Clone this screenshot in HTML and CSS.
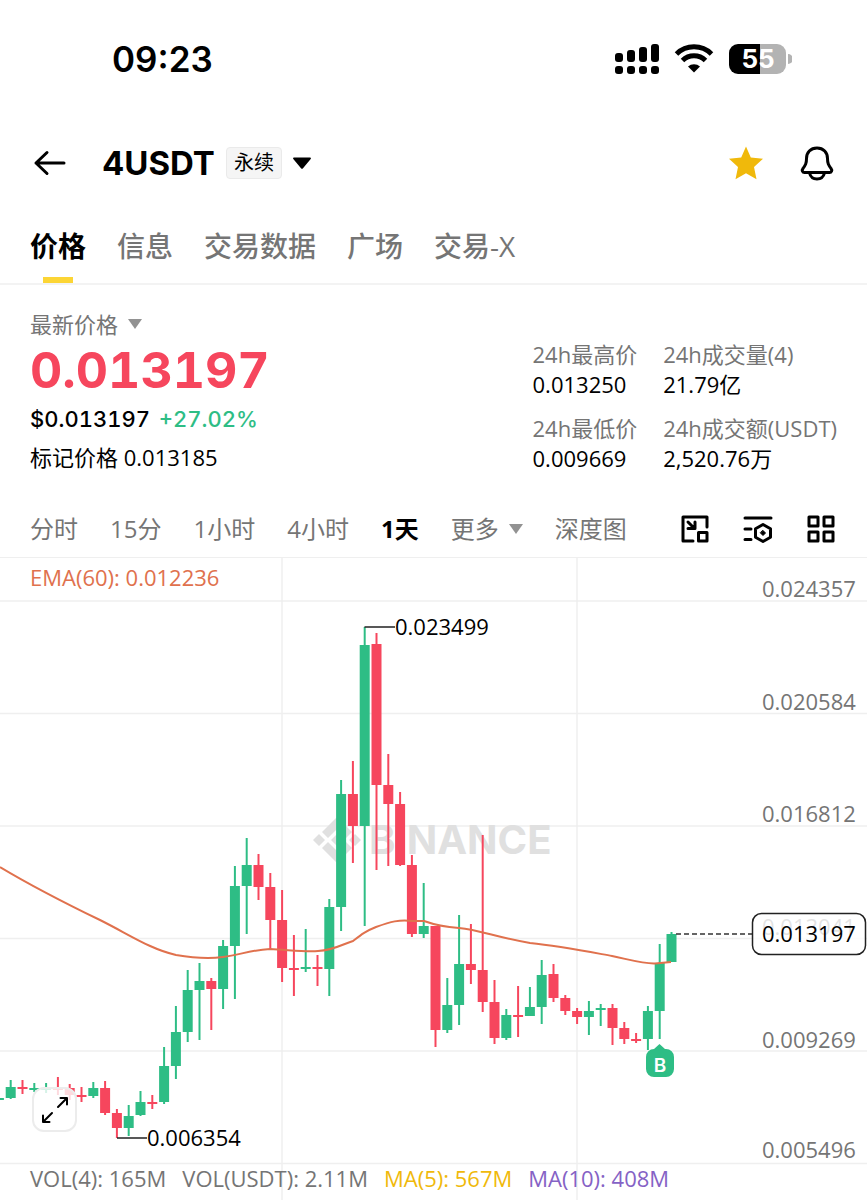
FILE: index.html
```html
<!DOCTYPE html>
<html lang="zh-CN">
  <head>
    <meta charset="UTF-8" />
    <meta name="viewport" content="width=device-width, initial-scale=1.0" />
    <title>4USDT 永续</title>
    <link rel="stylesheet" href="styles.css" />
  </head>
  <body>
    <div class="status-bar">
      <time class="clock">09:23</time>
      <div class="status-icons">
        <svg width="46" height="32" viewBox="0 0 46 32" aria-hidden="true">
          <rect x="1" y="10" width="8" height="9" rx="3" />
          <rect x="13" y="7" width="8" height="12" rx="3" />
          <rect x="25" y="4" width="8" height="15" rx="3" />
          <rect x="37" y="1" width="8" height="18" rx="3" />
          <rect x="1" y="23" width="8" height="8" rx="3" />
          <rect x="13" y="23" width="8" height="8" rx="3" />
          <rect x="25" y="23" width="8" height="8" rx="3" />
          <rect x="37" y="23" width="8" height="8" rx="3" />
        </svg>
        <svg width="40" height="32" viewBox="0 0 40 32" aria-hidden="true">
          <path d="M20 29.500l-6-6a9 9 0 0 1 12 0z" />
          <path d="M2.500 11a25 25 0 0 1 35 0M8.500 17.500a16.500 16.500 0 0 1 23 0" class="wifi-arc" />
        </svg>
        <svg width="64" height="32" viewBox="0 0 64 32" aria-hidden="true">
          <path d="M10 1H32V31H10A9 9 0 0 1 1 22V10A9 9 0 0 1 10 1z" />
          <path d="M32 1H49A9 9 0 0 1 58 10V22A9 9 0 0 1 49 31H32z" class="battery-rest" />
          <path d="M60 11a5 5 0 0 1 0 10z" class="battery-rest" />
          <text x="30" y="25" class="battery-text">55</text>
        </svg>
      </div>
    </div>

    <header class="header">
      <button class="icon-btn" aria-label="返回">
        <svg width="40" height="36" viewBox="0 0 40 36" class="line-icon">
          <path d="M34 18H6M17 7.500L6 18l11 10.500" />
        </svg>
      </button>
      <button class="symbol">
        <span class="symbol-name">4USDT</span>
        <span class="badge">永续</span>
        <svg width="18" height="12" viewBox="0 0 18 12"><path d="M1 0.500h16a1 1 0 0 1 .7 1.500L10 11.200a1.300 1.300 0 0 1-2 0L.3 2A1 1 0 0 1 1 .5z" /></svg>
      </button>
      <div class="header-actions">
        <button class="icon-btn" aria-label="自选">
          <svg width="36" height="36" viewBox="0 0 36 36" class="star">
            <path d="M18 1.500L22.800 12.600 35 13.800 26 22 28.500 34.200 18 28.200 7.500 34.200 10 22 1 13.800 13.200 12.600z" />
          </svg>
        </button>
        <button class="icon-btn" aria-label="提醒">
          <svg width="36" height="36" viewBox="0 0 36 36" class="line-icon">
            <path d="M18 3C11.500 3 7.500 7.500 7.500 13.500C7.500 18.500 6.500 20 4 23.500C2.500 25.500 3.500 27.500 5.500 27.500H30.500C32.500 27.500 33.500 25.500 32 23.500C29.500 20 28.500 18.500 28.500 13.500C28.500 7.500 24.500 3 18 3z" />
            <path d="M10.500 28C11.500 32 14.500 34 18 34S24.500 32 25.500 28" />
          </svg>
        </button>
      </div>
    </header>

    <nav class="tabs">
      <a href="#price" class="tab active">价格</a>
      <a href="#info" class="tab">信息</a>
      <a href="#data" class="tab">交易数据</a>
      <a href="#square" class="tab">广场</a>
      <a href="#trade-x" class="tab">交易-X</a>
    </nav>

    <main>
      <section class="ticker" id="price">
        <div class="last">
          <button class="last-label">
            最新价格
            <svg width="14" height="10" viewBox="0 0 14 10" class="caret"><path d="M0 0h14L7 10z" /></svg>
          </button>
          <div class="last-price">0.013197</div>
          <div class="last-usd">$0.013197 <span class="up">+27.02%</span></div>
          <div class="mark">标记价格 0.013185</div>
        </div>
        <dl class="stats">
          <div><dt>24h最高价</dt><dd>0.013250</dd></div>
          <div><dt>24h成交量(4)</dt><dd>21.79亿</dd></div>
          <div><dt>24h最低价</dt><dd>0.009669</dd></div>
          <div><dt>24h成交额(USDT)</dt><dd>2,520.76万</dd></div>
        </dl>
      </section>

      <div class="intervals">
        <button>分时</button>
        <button>15分</button>
        <button>1小时</button>
        <button>4小时</button>
        <button class="active">1天</button>
        <button class="more">
          更多
          <svg width="14" height="10" viewBox="0 0 14 10" class="caret"><path d="M0 0h14L7 10z" /></svg>
        </button>
        <button>深度图</button>
        <div class="tools">
          <button class="icon-btn" aria-label="小窗">
            <svg width="28" height="28" viewBox="0 0 28 28" class="line-icon">
              <path d="M12 26H2V2H26V12M7 7L13 13M14 7V13.500H7" />
              <path d="M17.500 17.500H26V26H17.500z" />
            </svg>
          </button>
          <button class="icon-btn" aria-label="指标设置">
            <svg width="30" height="28" viewBox="0 0 30 28" class="line-icon">
              <path d="M2 3H28M2 14H8M2 24.500H8M20 9.500L27.500 13.700V22.300L20 26.500 12.500 22.300V13.700z" />
              <path d="M20 15.500L22.500 18 20 20.500 17.500 18z" class="solid" />
            </svg>
          </button>
          <button class="icon-btn" aria-label="布局">
            <svg width="28" height="28" viewBox="0 0 28 28" class="line-icon">
              <path d="M2 2H11V11H2zM17 2H26V11H17zM2 17H11V26H2zM17 17H26V26H17z" />
            </svg>
          </button>
        </div>
      </div>

      <section class="chart">
        <svg id="klines" class="klines" viewBox="0 558 867 642">
          <path class="grid" d="M0 601H867M0 713.500H867M0 826H867M0 938.500H867M0 1051H867M0 1163.500H867M282 558V1200M577 558V1200" />

          <g class="watermark">
            <path d="M337 817L352 832 346 838 337 829 328 838 322 832zM337 863L352 848 346 842 337 851 328 842 322 848zM319 834L325 840 319 846 313 840zM337 834L343 840 337 846 331 840zM355 834L361 840 355 846 349 840z" />
            <text x="369" y="854">BINANCE</text>
          </g>

          <g id="candles"></g>

          <path class="ema" d="M0 867C35 888 65 903 100 920C130 935 150 949 176 955C200 959 215 958 223 957C240 955 250 950 270 949C290 950 305 952 318 951C335 950 340 945 353 941C362 934 366 931 376 927C390 922 400 919 412 921L424 921C435 925 445 927 459 928C480 930 495 937 530 943C560 946 590 952 612 956C635 961 645 964 655 963.500L671 962" />

          <path class="pointer" d="M364.500 627H395M117 1138H147" />
          <text x="395" y="635" class="label dark">0.023499</text>
          <text x="147" y="1146" class="label dark">0.006354</text>

          <text x="762" y="597" class="label">0.024357</text>
          <text x="762" y="710" class="label">0.020584</text>
          <text x="762" y="822" class="label">0.016812</text>
          <text x="762" y="935" class="label">0.013041</text>
          <text x="762" y="1048" class="label">0.009269</text>
          <text x="762" y="1158" class="label">0.005496</text>

          <path class="last-line" d="M676 934H752" />
          <rect class="last-box" x="752.500" y="913.500" width="113" height="41" rx="9" />
          <text x="762" y="942" class="label dark">0.013197</text>

          <path class="buy" d="M654 1049L659.500 1044 665 1049H666A8 8 0 0 1 674 1057V1069A8 8 0 0 1 666 1077H654A8 8 0 0 1 646 1069V1057A8 8 0 0 1 654 1049z" />
          <text x="660" y="1072" class="buy-text">B</text>
        </svg>
        <div class="legend ema-legend">EMA(60): 0.012236</div>
        <div class="legend vol-legend">
          <span>VOL(4): 165M</span>
          <span>VOL(USDT): 2.11M</span>
          <span class="ma5">MA(5): 567M</span>
          <span class="ma10">MA(10): 408M</span>
        </div>
        <button class="expand" aria-label="全屏">
          <svg width="30" height="30" viewBox="0 0 30 30" class="line-icon">
            <path d="M18 12L27 3M20.500 3H27V9.500M12 18L3 27M3 20.500V27H9.500" />
          </svg>
        </button>
      </section>
    </main>

    <script src="chart.js"></script>
  </body>
</html>
```
FILE: styles.css
```css
* {
  box-sizing: border-box;
}
body {
  margin: 0;
  background-color: #fff;
  color: #000;
  font-family: "Open Sans", "Noto Sans CJK SC", sans-serif;
  font-size: 22px;
  line-height: 30px;
}
button {
  padding: 0;
  border: 0;
  background: none;
  color: inherit;
  font: inherit;
  cursor: pointer;
}
svg {
  display: block;
  flex: none;
}
.line-icon {
  fill: none;
  stroke: #000;
  stroke-width: 3;
  stroke-linecap: round;
  stroke-linejoin: round;
}
.line-icon .solid {
  fill: #000;
  stroke-width: 1;
}
.caret {
  fill: #929292;
}

/* status bar */
.status-bar {
  display: flex;
  justify-content: space-between;
  align-items: center;
  height: 118px;
  padding: 0 75px 0 112px;
}
.clock {
  font-family: Inter, sans-serif;
  font-size: 35px;
  font-weight: 600;
}
.status-icons {
  display: flex;
  align-items: center;
  gap: 14px;
}
.wifi-arc {
  fill: none;
  stroke: #000;
  stroke-width: 5;
}
.battery-rest {
  fill: #b3b3b3;
}
.battery-text {
  fill: #fff;
  font-family: Inter, sans-serif;
  font-size: 26px;
  font-weight: 700;
  text-anchor: middle;
}

/* header */
.header {
  display: flex;
  align-items: center;
  height: 90px;
  padding: 0 32px 0 30px;
}
.symbol {
  display: flex;
  align-items: center;
  gap: 11px;
  margin-left: 32px;
}
.symbol-name {
  font-family: Inter, sans-serif;
  font-size: 33px;
  font-weight: 700;
}
.badge {
  padding: 0 7px;
  border: 1px solid #eaeaea;
  border-radius: 4px;
  background-color: #f5f5f5;
  font-size: 20px;
}
.header-actions {
  display: flex;
  gap: 35px;
  margin-left: auto;
}
.star {
  fill: #f0b90b;
}

/* tabs */
.tabs {
  display: flex;
  gap: 31px;
  padding: 0 30px;
  border-bottom: 2px solid #f3f3f3;
}
.tab {
  position: relative;
  padding: 18px 0 17px;
  color: #757575;
  font-size: 28px;
  font-weight: 500;
  line-height: 40px;
  text-decoration: none;
}
.tab.active {
  color: #000;
  font-weight: 700;
}
.tab.active::after {
  content: "";
  position: absolute;
  bottom: 0;
  left: 50%;
  width: 30px;
  height: 6px;
  margin-left: -15px;
  background-color: #fcd535;
}

/* ticker */
.ticker {
  display: flex;
  justify-content: space-between;
  align-items: flex-end;
  padding: 24px 30px 22px;
}
.last-label {
  display: flex;
  align-items: center;
  gap: 10px;
  color: #757575;
}
.last-price {
  color: #f6465d;
  font-family: Inter, sans-serif;
  font-size: 50px;
  font-weight: 700;
  font-variant-numeric: tabular-nums;
  line-height: 63px;
}
.last-usd {
  font-family: Inter, sans-serif;
  font-weight: 500;
  font-variant-numeric: tabular-nums;
  line-height: 34px;
}
.up {
  margin-left: 3px;
  color: #2ebd85;
}
.mark {
  line-height: 42px;
}
.stats {
  display: grid;
  grid-template-columns: auto auto;
  gap: 14px 26px;
  margin: 0 0 5px;
}
.stats dt {
  color: #757575;
}
.stats dd {
  margin: 0;
}

/* intervals */
.intervals {
  display: flex;
  align-items: center;
  gap: 32px;
  height: 57px;
  padding: 0 32px 0 30px;
  color: #757575;
  font-size: 24px;
}
.intervals .active {
  color: #000;
  font-weight: 700;
}
.more {
  display: flex;
  align-items: center;
  gap: 10px;
}
.tools {
  display: flex;
  gap: 34px;
  margin-left: auto;
}

/* chart */
.chart {
  position: relative;
}
.klines {
  width: 100%;
  border-top: 1px solid #efefef;
}
.grid {
  fill: none;
  stroke: #efefef;
  stroke-width: 1.5;
}
.watermark {
  fill: #e0e0e0;
  font-family: Inter, sans-serif;
  font-size: 40px;
  font-weight: 700;
}
.candle {
  stroke-width: 2;
}
.candle.rise {
  fill: #2ebd85;
  stroke: #2ebd85;
}
.candle.fall {
  fill: #f6465d;
  stroke: #f6465d;
}
.candle rect {
  stroke: none;
}
.ema {
  fill: none;
  stroke: #e0714d;
  stroke-width: 2;
}
.pointer {
  fill: none;
  stroke: #222;
  stroke-width: 1.5;
}
.label {
  fill: #757575;
  font-size: 22px;
}
.label.dark {
  fill: #000;
}
.last-line {
  stroke: #333;
  stroke-width: 1.5;
  stroke-dasharray: 5 3;
}
.last-box {
  fill: #fff;
  fill-opacity: 0.8;
  stroke: #222;
  stroke-width: 1.5;
}
.buy {
  fill: #2ebd85;
}
.buy-text {
  fill: #fff;
  font-family: Inter, sans-serif;
  font-size: 19px;
  font-weight: 600;
  text-anchor: middle;
}
.legend {
  position: absolute;
  left: 30px;
}
.ema-legend {
  top: 5px;
  color: #e0714d;
}
.vol-legend {
  display: flex;
  bottom: 7px;
  gap: 16px;
  color: #757575;
  white-space: nowrap;
}
.ma5 {
  color: #f0b90b;
}
.ma10 {
  color: #8562c5;
}
.expand {
  display: flex;
  position: absolute;
  bottom: 68px;
  left: 32px;
  justify-content: center;
  align-items: center;
  width: 45px;
  height: 45px;
  border: 2px solid #ececec;
  border-radius: 12px;
  background-color: rgba(255, 255, 255, 0.8);
}
.expand .line-icon {
  stroke-width: 2;
}
```
FILE: chart.js
```js
// [high, body top, body bottom, low, rise], oldest first
const candles = [
  [1092, 1098, 1100, 1100, 1],
  [1080, 1087, 1098, 1099, 1],
  [1080, 1087, 1089, 1094, 0],
  [1083, 1088, 1090, 1092, 1],
  [1083, 1088, 1090, 1093, 1],
  [1077, 1088, 1090, 1095, 0],
  [1084, 1088, 1095, 1100, 0],
  [1087, 1095, 1097, 1102, 0],
  [1082, 1088, 1096, 1098, 1],
  [1081, 1088, 1113, 1115, 0],
  [1109, 1113, 1128, 1138, 0],
  [1105, 1116, 1128, 1136, 1],
  [1091, 1102, 1115, 1116, 1],
  [1095, 1102, 1104, 1109, 0],
  [1047, 1066, 1102, 1104, 1],
  [1006, 1032, 1066, 1079, 1],
  [970, 990, 1032, 1042, 1],
  [963, 981, 990, 1040, 1],
  [978, 981, 989, 1030, 0],
  [940, 946, 989, 1009, 1],
  [866, 886, 946, 999, 1],
  [838, 865, 886, 934, 1],
  [854, 865, 887, 900, 0],
  [873, 887, 920, 949, 0],
  [890, 920, 968, 982, 0],
  [935, 968, 970, 996, 0],
  [929, 967, 969, 972, 1],
  [955, 967, 969, 986, 0],
  [899, 907, 969, 996, 1],
  [780, 794, 907, 931, 1],
  [761, 794, 826, 863, 0],
  [627, 645, 826, 926, 1],
  [633, 644, 785, 870, 0],
  [754, 785, 804, 866, 0],
  [792, 804, 865, 866, 0],
  [855, 865, 934, 937, 0],
  [883, 926, 934, 938, 1],
  [926, 926, 1030, 1047, 0],
  [978, 1005, 1030, 1033, 1],
  [915, 964, 1005, 1025, 1],
  [924, 964, 970, 984, 0],
  [835, 970, 1002, 1012, 0],
  [980, 1002, 1038, 1044, 0],
  [1009, 1015, 1038, 1040, 1],
  [986, 1015, 1017, 1037, 0],
  [987, 1007, 1016, 1016, 1],
  [960, 975, 1007, 1024, 1],
  [964, 974, 998, 1002, 0],
  [995, 998, 1011, 1015, 0],
  [1008, 1011, 1017, 1024, 0],
  [1001, 1011, 1017, 1035, 1],
  [1004, 1008, 1010, 1026, 1],
  [1004, 1008, 1028, 1045, 0],
  [1022, 1028, 1039, 1044, 0],
  [1033, 1039, 1041, 1043, 0],
  [1006, 1011, 1039, 1050, 1],
  [944, 963, 1011, 1039, 1],
  [932, 934, 962, 962, 1],
];

const step = 11.8;
const lastX = 671.5;
const bodyWidth = 10;

document.getElementById("candles").innerHTML = candles
  .map(([high, top, bottom, low, rise], i) => {
    const x = lastX - (candles.length - 1 - i) * step;
    return `
      <g class="candle ${rise ? "rise" : "fall"}">
        <path d="M${x} ${high}V${low}" />
        <rect x="${x - bodyWidth / 2}" y="${top}" width="${bodyWidth}" height="${bottom - top}" />
      </g>`;
  })
  .join("");
```
